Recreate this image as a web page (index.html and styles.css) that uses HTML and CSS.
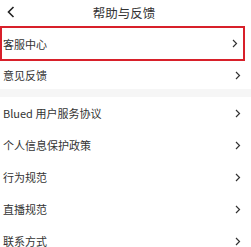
FILE: index.html
```html
<!DOCTYPE html>
<html lang="zh-CN">
<head>
  <meta charset="UTF-8" />
  <meta name="viewport" content="width=device-width, initial-scale=1.0"/>
  <title>帮助与反馈</title>
  <link rel="stylesheet" href="styles.css">
</head>
<body>
  <div class="header">
    <svg class="back" width="8" height="12" viewBox="0 0 8 12"><path d="M6.5 1 L1.5 6 L6.5 11" fill="none" stroke="#222" stroke-width="1.6"/></svg>
    <span class="title">帮助与反馈</span>
  </div>

  <div class="group">
    <div class="row active"><span>客服中心</span><svg class="arrow" width="6" height="9" viewBox="0 0 6 9"><path d="M1 1 L4.5 4.5 L1 8" fill="none" stroke="#333" stroke-width="1.2"/></svg></div>
    <div class="row short"><span>意见反馈</span><svg class="arrow" width="6" height="9" viewBox="0 0 6 9"><path d="M1 1 L4.5 4.5 L1 8" fill="none" stroke="#333" stroke-width="1.2"/></svg></div>
  </div>

  <div class="gap"></div>

  <div class="group">
    <div class="row"><span>Blued 用户服务协议</span><svg class="arrow" width="6" height="9" viewBox="0 0 6 9"><path d="M1 1 L4.5 4.5 L1 8" fill="none" stroke="#333" stroke-width="1.2"/></svg></div>
    <div class="row"><span>个人信息保护政策</span><svg class="arrow" width="6" height="9" viewBox="0 0 6 9"><path d="M1 1 L4.5 4.5 L1 8" fill="none" stroke="#333" stroke-width="1.2"/></svg></div>
    <div class="row"><span>行为规范</span><svg class="arrow" width="6" height="9" viewBox="0 0 6 9"><path d="M1 1 L4.5 4.5 L1 8" fill="none" stroke="#333" stroke-width="1.2"/></svg></div>
    <div class="row"><span>直播规范</span><svg class="arrow" width="6" height="9" viewBox="0 0 6 9"><path d="M1 1 L4.5 4.5 L1 8" fill="none" stroke="#333" stroke-width="1.2"/></svg></div>
    <div class="row"><span>联系方式</span><svg class="arrow" width="6" height="9" viewBox="0 0 6 9"><path d="M1 1 L4.5 4.5 L1 8" fill="none" stroke="#333" stroke-width="1.2"/></svg></div>
  </div>
</body>
</html>
```

FILE: styles.css
```css
body {
  margin: 0;
  background: #fff;
  font-family: "Noto Sans CJK SC", "Noto Sans", sans-serif;
  color: #333;
  overflow: hidden;
}
.header {
  height: 25px;
  display: flex;
  align-items: center;
  justify-content: center;
  position: relative;
}
.back {
  position: absolute;
  left: 7px;
  top: 6px;
}
.title {
  font-size: 12.5px;
  color: #333;
  margin-left: -3px;
}
.row {
  height: 32px;
  display: flex;
  align-items: center;
  justify-content: space-between;
  padding: 0 10px 0 3px;
  font-size: 11px;
  box-sizing: border-box;
}
.row.active {
  height: 35px;
  border: 2.5px solid #d8202a;
  padding: 0 5px 0 1px;
  margin-right: 6px;
  margin-top: 1px;
}
.row.short {
  height: 28px;
}
.gap {
  height: 8px;
  background: #f6f6f6;
}
.arrow {
  display: block;
}
```
